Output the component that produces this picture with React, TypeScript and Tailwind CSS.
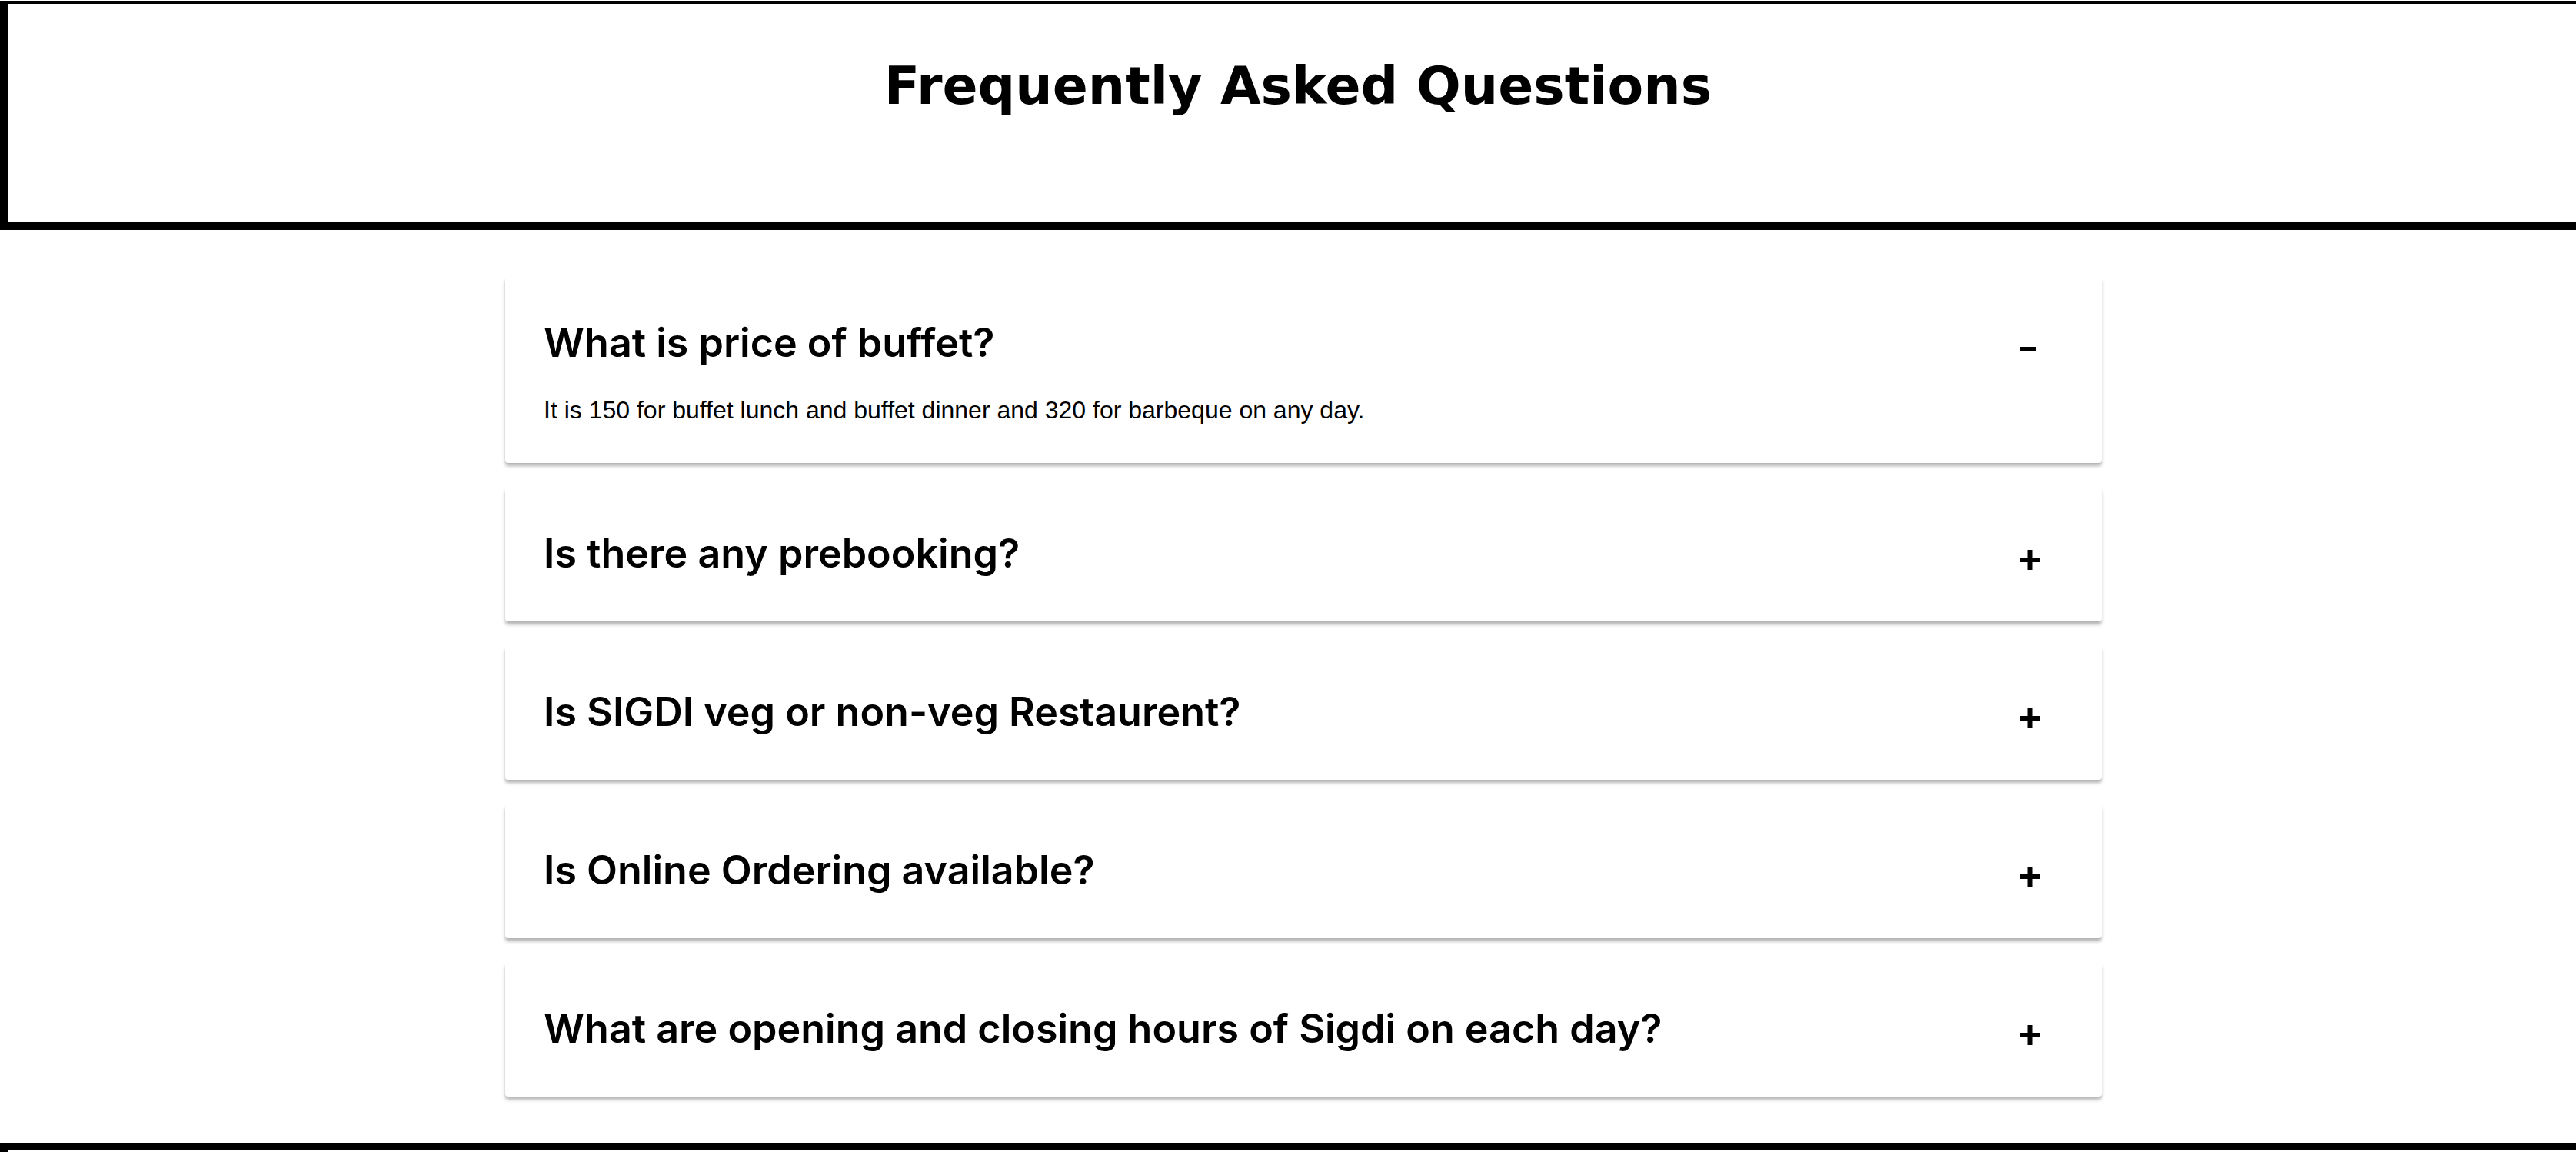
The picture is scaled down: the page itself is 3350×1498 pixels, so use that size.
import { useState } from "react";

const faqs = [
  {
    question: "What is price of buffet?",
    answer:
      "It is 150 for buffet lunch and buffet dinner and 320 for barbeque on any day.",
  },
  {
    question: "Is there any prebooking?",
    answer: "Yes, tables can be booked in advance.",
  },
  {
    question: "Is SIGDI veg or non-veg Restaurent?",
    answer: "We serve both veg and non-veg dishes.",
  },
  {
    question: "Is Online Ordering available?",
    answer: "Yes, online ordering is available.",
  },
  {
    question: "What are opening and closing hours of Sigdi on each day?",
    answer: "Please call the restaurant for the hours of each day.",
  },
];

function ToggleIcon({ open }: { open: boolean }) {
  return (
    <svg
      className="mt-4 h-[26px] w-[26px] shrink-0"
      viewBox="0 0 26 26"
      fill="currentColor"
      aria-hidden="true"
    >
      {open ? (
        <rect x="0" y="10" width="21" height="6" />
      ) : (
        <path d="M0 10H9.500V0H16.500V10H26V16H16.500V26H9.500V16H0Z" />
      )}
    </svg>
  );
}

function FaqItem({
  id,
  question,
  answer,
  open,
  onToggle,
}: {
  id: string;
  question: string;
  answer: string;
  open: boolean;
  onToggle: () => void;
}) {
  return (
    <li className="rounded bg-white px-[50px] pt-12 pb-[51px] shadow-[0_4px_4px_rgba(0,0,0,0.3)]">
      <h2>
        <button
          type="button"
          aria-expanded={open}
          aria-controls={id}
          onClick={onToggle}
          className="flex w-full items-center justify-between pr-[30px] text-left font-['Inter',sans-serif] text-[52px] leading-[75px] font-semibold"
        >
          {question}
          <ToggleIcon open={open} />
        </button>
      </h2>
      {open && (
        <p id={id} className="mt-8 text-[32px] leading-9">
          {answer}
        </p>
      )}
    </li>
  );
}

export default function App() {
  const [openIndex, setOpenIndex] = useState(0);

  return (
    <div className="bg-white pt-px font-['Liberation_Sans',sans-serif] text-black">
      <header className="border-t-[4px] border-b-[10px] border-l-[10px] border-black pt-[62px] pb-[132px] pl-4 text-center">
        <h1 className="font-['DejaVu_Sans',sans-serif] text-[68px] leading-[90px] font-bold">
          Frequently Asked Questions
        </h1>
      </header>
      <main className="pt-[61px] pb-[60px] pl-10">
        <ul className="mx-auto flex w-full max-w-[2076px] flex-col gap-8">
          {faqs.map((faq, i) => (
            <FaqItem
              key={faq.question}
              id={`faq-${i}`}
              question={faq.question}
              answer={faq.answer}
              open={openIndex === i}
              onToggle={() => setOpenIndex(openIndex === i ? -1 : i)}
            />
          ))}
        </ul>
      </main>
      <footer className="h-3 border-t-[10px] border-l-[10px] border-black" />
    </div>
  );
}
